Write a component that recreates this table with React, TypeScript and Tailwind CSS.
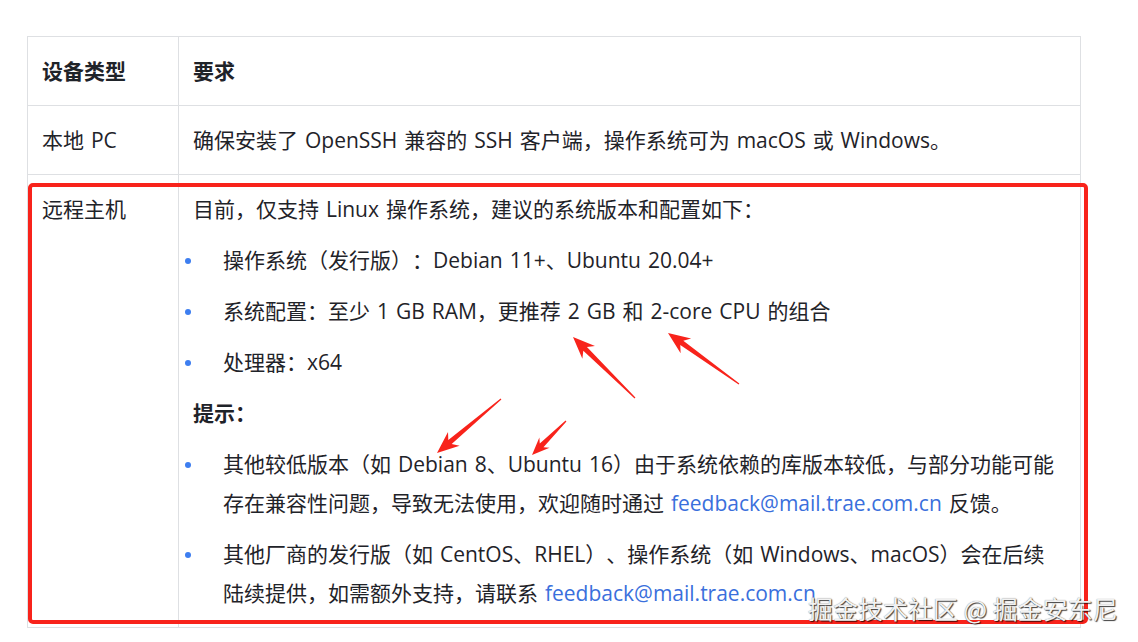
import React from 'react';

const font = 'font-["Open_Sans","Noto_Sans_CJK_SC",sans-serif]';

const Bullet: React.FC<{ children: React.ReactNode }> = ({ children }) => (
  <li className="flex -ml-[8px]">
    <div className="w-[38px] h-[39px] shrink-0 flex items-center">
      <span className="w-[6px] h-[6px] rounded-full bg-[#3d7ef0]" />
    </div>
    <div>{children}</div>
  </li>
);

const Link: React.FC<{ children: React.ReactNode }> = ({ children }) => (
  <a className="text-[#3a6fdc]">{children}</a>
);

// red hand-drawn style arrow, pointing from tail to tip
const Arrow: React.FC<{ x1: number; y1: number; x2: number; y2: number; head?: number }> = ({
  x1,
  y1,
  x2,
  y2,
  head = 20,
}) => {
  const len = Math.hypot(x2 - x1, y2 - y1);
  const ang = (Math.atan2(y2 - y1, x2 - x1) * 180) / Math.PI;
  const hw = head * 0.45;
  const pts = [
    [0, -0.6],
    [len - head * 0.85, -2.6],
    [len - head * 1.1, -hw],
    [len, 0],
    [len - head * 1.1, hw],
    [len - head * 0.85, 2.6],
    [0, 0.6],
  ]
    .map((p) => p.join(','))
    .join(' ');
  return (
    <g transform={`translate(${x1} ${y1}) rotate(${ang})`}>
      <polygon points={pts} fill="#f8231b" />
    </g>
  );
};

const cell = 'border border-[#dee0e3] px-[14px] pt-[15px] pb-[14px] text-left align-top';

const App: React.FC = () => {
  return (
    <div
      className={`relative w-[1138px] h-[642px] overflow-hidden bg-white text-[#1f2329] text-[21px] [text-spacing-trim:space-all] [word-spacing:1.5px] ${font}`}
    >
      <div className="pl-[27px] pt-[36px]">
        <table className="w-[1054px] table-fixed border-collapse">
          <colgroup>
            <col className="w-[151px]" />
            <col />
          </colgroup>
          <thead>
            <tr className="h-[68px]">
              <th className={`${cell} font-bold leading-[39px]`}>设备类型</th>
              <th className={`${cell} font-bold leading-[39px]`}>要求</th>
            </tr>
          </thead>
          <tbody className="leading-[39px]">
            <tr className="h-[69px]">
              <td className={cell}>本地 PC</td>
              <td className={cell}>确保安装了 OpenSSH 兼容的 SSH 客户端，操作系统可为 macOS 或 Windows。</td>
            </tr>
            <tr>
              <td className={cell}>远程主机</td>
              <td className={cell}>
                <div className="flex flex-col gap-[12px]">
                  <p>目前，仅支持 Linux 操作系统，建议的系统版本和配置如下：</p>
                  <ul className="flex flex-col gap-[12px]">
                    <Bullet>操作系统（发行版）：Debian 11+、Ubuntu 20.04+</Bullet>
                    <Bullet>系统配置：至少 1 GB RAM，更推荐 2 GB 和 2-core CPU 的组合</Bullet>
                    <Bullet>处理器：x64</Bullet>
                  </ul>
                  <p className="font-bold">提示：</p>
                  <ul className="flex flex-col gap-[12px]">
                    <Bullet>
                      <span className="whitespace-nowrap">
                        其他较低版本（如 Debian 8、Ubuntu 16）由于系统依赖的库版本较低，与部分功能可能
                      </span>
                      <br />
                      存在兼容性问题，导致无法使用，欢迎随时通过 <Link>feedback@mail.trae.com.cn</Link> 反馈。
                    </Bullet>
                    <Bullet>
                      <span className="whitespace-nowrap">
                        其他厂商的发行版（如 CentOS、RHEL）、操作系统（如 Windows、macOS）会在后续
                      </span>
                      <br />
                      陆续提供，如需额外支持，请联系 <Link>feedback@mail.trae.com.cn</Link>
                    </Bullet>
                  </ul>
                </div>
              </td>
            </tr>
          </tbody>
        </table>
      </div>

      {/* red annotation box */}
      <div className="absolute left-[28px] top-[183px] w-[1060px] h-[441px] border-[4px] border-[#f8231b] rounded-[5px] pointer-events-none" />

      {/* annotation arrows */}
      <svg className="absolute inset-0 pointer-events-none" width="1138" height="642">
        <Arrow x1={635} y1={398} x2={573} y2={337} />
        <Arrow x1={739} y1={384} x2={668} y2={333} />
        <Arrow x1={501} y1={399} x2={437} y2={453} />
        <Arrow x1={566} y1={421} x2={532} y2={455} head={16} />
      </svg>

      {/* watermark */}
      <div className='absolute left-[808px] top-[591px] text-[25px] leading-[34px] text-[#f2f2f2] font-["Noto_Sans_CJK_SC",sans-serif] [word-spacing:0] [text-shadow:1px_1px_1px_rgba(0,0,0,0.75),0_0_1px_rgba(0,0,0,0.5)] whitespace-nowrap'>
        掘金技术社区 @ 掘金安东尼
      </div>
    </div>
  );
};

export default App;
